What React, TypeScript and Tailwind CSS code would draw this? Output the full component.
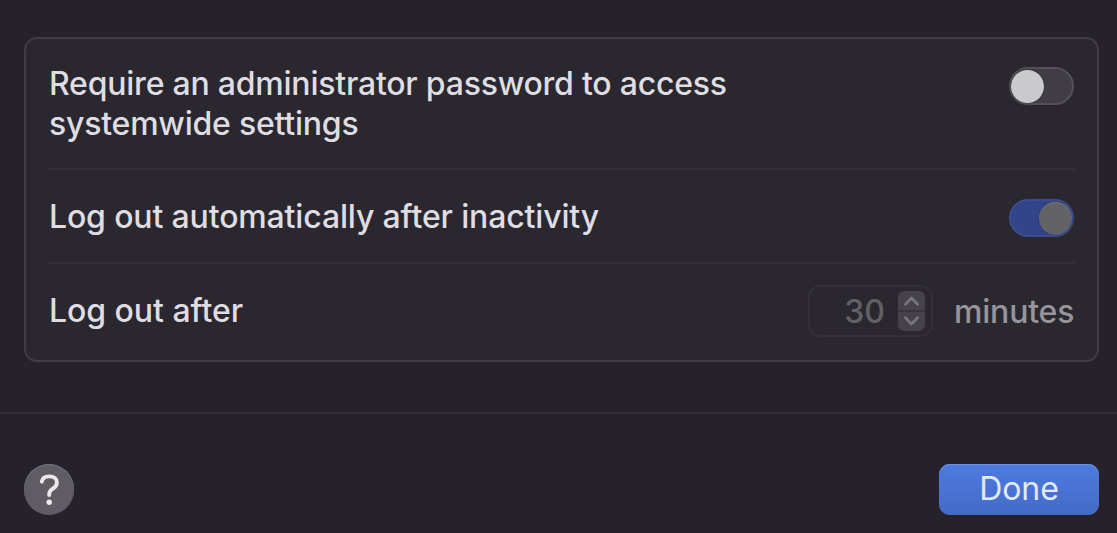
import { useState } from 'react';
import clsx from 'clsx';

function Toggle({
  label,
  checked,
  disabled,
  onChange,
}: {
  label: string;
  checked: boolean;
  disabled?: boolean;
  onChange?: (checked: boolean) => void;
}) {
  return (
    <button
      type="button"
      role="switch"
      aria-label={label}
      aria-checked={checked}
      disabled={disabled}
      onClick={() => onChange?.(!checked)}
      className={clsx(
        'flex h-[38px] w-[65px] shrink-0 items-center rounded-full border-2',
        checked ? 'justify-end border-[#3b4d8c] bg-[#324588]' : 'border-[#535157] bg-[#403e44]',
      )}
    >
      <span
        className={clsx(
          'h-[33px] w-[33px] rounded-full',
          disabled
            ? 'bg-[#636266] shadow-[0_0_2px_#25346b,inset_0_1px_1px_#747377]'
            : 'bg-[#cac9cc] shadow-[0_0_2px_#2c2a30]',
        )}
      />
    </button>
  );
}

function Stepper() {
  return (
    <svg width="27" height="40" viewBox="0 0 27 40" fill="none" aria-hidden="true">
      <rect width="27" height="40" rx="6" fill="#454349" />
      <path d="M0 20H27" stroke="#343238" strokeWidth="1.5" />
      <path
        d="M7.4 13.2L13.5 7L19.6 13.2M7.4 26.8L13.5 33L19.6 26.8"
        stroke="#77757b"
        strokeWidth="2.8"
        strokeLinecap="round"
        strokeLinejoin="round"
      />
    </svg>
  );
}

export default function App() {
  const [requirePassword, setRequirePassword] = useState(false);

  return (
    <div className="flex h-[533px] w-[1117px] flex-col overflow-hidden bg-[#252329] font-['Inter',sans-serif] text-[32px] leading-[40px] font-[450] text-[#dfdde1]">
      <section className="mr-[18px] ml-6 mt-[37px] h-[325px] rounded-[13px] border-2 border-[#403e44] bg-[#2a282e] pr-[23px] pl-[23px]">
        <div className="flex h-[129px] items-start justify-between pt-[25px]">
          <p className="w-[720px] tracking-[-0.22px]">
            Require an administrator password to access
            <br />
            systemwide settings
          </p>
          <div className="pt-[3px]">
            <Toggle
              label="Require an administrator password"
              checked={requirePassword}
              onChange={setRequirePassword}
            />
          </div>
        </div>

        <div className="flex h-[94px] items-start justify-between border-t-2 border-[#333137] pt-[26px]">
          <p className="pt-px tracking-[-0.15px]">Log out automatically after inactivity</p>
          <div className="pt-[3px]">
            <Toggle label="Log out automatically" checked disabled />
          </div>
        </div>

        <div className="flex h-[98px] items-start justify-between border-t-2 border-[#333137] pt-[21px]">
          <p className="pt-[6px] tracking-[-0.05px]">Log out after</p>
          <div className="flex items-start">
            <div className="flex h-[52px] w-[125px] items-center justify-end rounded-[13px] border-2 border-[#333137] pr-[6px]">
              <span className="mr-[13px] pt-px text-[#626066]">30</span>
              <Stepper />
            </div>
            <span className="ml-[21px] w-[120px] pt-[7px] tracking-[-0.2px] text-[#97959b]">
              minutes
            </span>
          </div>
        </div>
      </section>

      <footer className="mt-[50px] flex items-start justify-between border-t-2 border-[#2f2d33] pt-[50px] pr-[18px] pl-6">
        <button
          type="button"
          aria-label="Help"
          className="flex h-[51px] w-[50px] items-center justify-center rounded-full bg-[#5f5d63] shadow-[inset_0_1px_1px_#77757b]"
        >
          <svg width="24" height="34" viewBox="0 0 24 34" fill="none" aria-hidden="true">
            <path
              d="M4.8 8.6C5.3 5.3 8 3.4 12.2 3.4C16.9 3.4 19.9 5.8 19.9 9.4C19.9 12.2 18.5 13.9 15.9 15.6C13.4 17.2 12.2 18.6 12.2 21V22"
              stroke="#ebe9ed"
              strokeWidth="3.9"
              strokeLinecap="round"
              strokeLinejoin="round"
            />
            <circle cx="12.2" cy="29.2" r="2.7" fill="#ebe9ed" />
          </svg>
        </button>
        <button
          type="button"
          className="h-[51px] w-[160px] rounded-[11px] bg-linear-to-b from-[#4e7ae0] to-[#436bc7] pb-[2px] font-normal tracking-[-0.1px] text-[#e1eafb] shadow-[inset_0_1px_1px_#7292df]"
        >
          Done
        </button>
      </footer>
    </div>
  );
}
